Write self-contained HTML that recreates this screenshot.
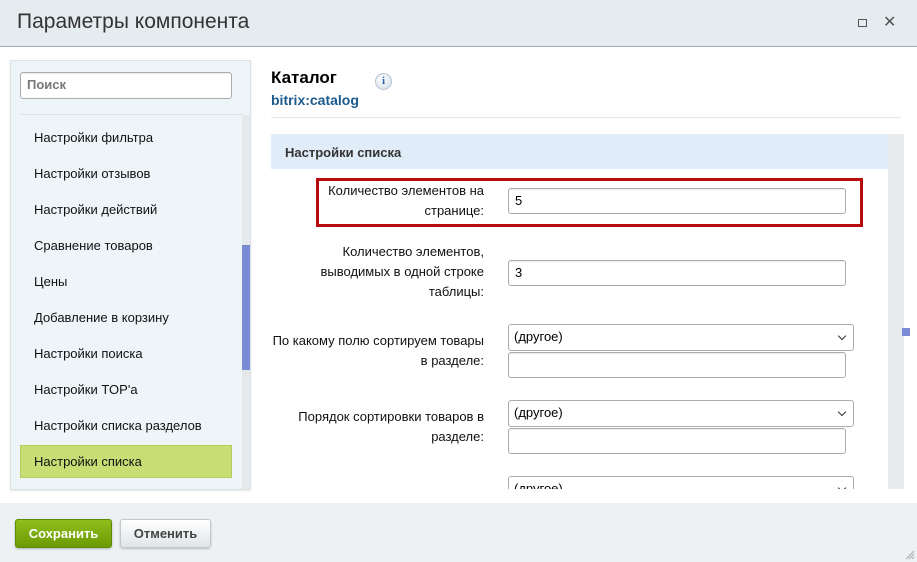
<!DOCTYPE html>
<html><head><meta charset="utf-8"><style>
*{box-sizing:border-box;margin:0;padding:0}
body{width:917px;height:562px;overflow:hidden;font-family:"Liberation Sans",Arial,sans-serif;font-size:13px;color:#222;background:#fff;position:relative}
.a{position:absolute}
.inp{position:absolute;background:#fff;border:1px solid #a8adb1;border-radius:3px;box-shadow:inset 0 1px 1px rgba(0,0,0,.08);padding-left:6px;font-size:13px;line-height:24px;color:#000}
.sel{position:absolute;background:#fff;border:1px solid #a8adb1;border-radius:3px;padding-left:5px;font-size:13px;line-height:24px;color:#000}
.sel:after{content:"";position:absolute;right:8px;top:8px;width:5px;height:5px;border-right:1.5px solid #333;border-bottom:1.5px solid #333;transform:rotate(45deg)}
.lbl{position:absolute;right:433px;text-align:right;line-height:20px;font-size:13px;color:#111}
.mi{position:absolute;left:34px;font-size:13px;color:#111}
</style></head><body>
<div class="a" style="left:0;top:0;width:917px;height:47px;background:#e4ecef;border-bottom:1px solid #a4abaf"></div>
<div class="a" style="left:17px;top:10px;font-size:21px;color:#333">Параметры компонента</div>
<div class="a" style="left:858px;top:19px;width:9px;height:8px;border:1px solid #555"></div>
<div class="a" style="left:883px;top:12px;font-size:16px;color:#555">✕</div>

<div class="a" style="left:10px;top:60px;width:241px;height:430px;background:#eef5f9;border:1px solid #dce3e6;box-shadow:0 1px 2px rgba(0,0,0,.1)"></div>
<div class="inp" style="left:20px;top:72px;width:212px;height:27px;color:#777;font-weight:bold;padding-left:6px">Поиск</div>
<div class="a" style="left:20px;top:114px;width:222px;height:1px;background:#dde4e8"></div>
<div class="a" style="left:242px;top:115px;width:8px;height:374px;background:#e6e9ec"></div>
<div class="a" style="left:242px;top:245px;width:8px;height:125px;background:#7a8bd6"></div>
<div class="a" style="left:20px;top:445px;width:212px;height:33px;background:#c8de75;border:1px solid #b5cc60"></div>
<div class="mi" style="top:130px">Настройки фильтра</div>
<div class="mi" style="top:166px">Настройки отзывов</div>
<div class="mi" style="top:202px">Настройки действий</div>
<div class="mi" style="top:238px">Сравнение товаров</div>
<div class="mi" style="top:274px">Цены</div>
<div class="mi" style="top:310px">Добавление в корзину</div>
<div class="mi" style="top:346px">Настройки поиска</div>
<div class="mi" style="top:382px">Настройки TOP'a</div>
<div class="mi" style="top:418px">Настройки списка разделов</div>
<div class="mi" style="top:454px">Настройки списка</div>

<div class="a" style="left:271px;top:68px;font-size:17px;font-weight:bold;color:#000">Каталог</div>
<div class="a" style="left:375px;top:73px;width:17px;height:17px;border-radius:50%;background:radial-gradient(circle at 40% 35%,#fff,#cfdbe6);border:1px solid #b8c6d3;color:#2a64a8;font-weight:bold;font-size:11px;text-align:center;line-height:15px;font-family:'Liberation Serif',serif">i</div>
<div class="a" style="left:271px;top:92px;font-size:14px;font-weight:bold;color:#1b5a8d">bitrix:catalog</div>
<div class="a" style="left:271px;top:117px;width:630px;height:1px;background:#e4e7e9"></div>
<div class="a" style="left:271px;top:134px;width:617px;height:35px;background:#e0ecf7"></div>
<div class="a" style="left:285px;top:145px;font-weight:bold;color:#333;font-size:13px">Настройки списка</div>
<div class="a" style="left:888px;top:134px;width:16px;height:355px;background:#e8eaed"></div>
<div class="a" style="left:902px;top:328px;width:8px;height:8px;background:#7a8bd6"></div>

<div class="a" style="left:316px;top:178px;width:547px;height:49px;border:3px solid #b80c0c"></div>
<div class="lbl" style="top:181px">Количество элементов на<br>странице:</div>
<div class="inp" style="left:508px;top:188px;width:338px;height:26px">5</div>

<div class="lbl" style="top:242px">Количество элементов,<br>выводимых в одной строке<br>таблицы:</div>
<div class="inp" style="left:508px;top:260px;width:338px;height:26px">3</div>

<div class="lbl" style="top:331px">По какому полю сортируем товары<br>в разделе:</div>
<div class="sel" style="left:508px;top:324px;width:346px;height:27px">(другое)</div>
<div class="inp" style="left:508px;top:352px;width:338px;height:26px"></div>

<div class="lbl" style="top:407px">Порядок сортировки товаров в<br>разделе:</div>
<div class="sel" style="left:508px;top:400px;width:346px;height:27px">(другое)</div>
<div class="inp" style="left:508px;top:428px;width:338px;height:26px"></div>

<div class="a" style="left:508px;top:476px;width:346px;height:13px;overflow:hidden"><div class="sel" style="left:0;top:0;width:346px;height:27px">(другое)</div></div>

<div class="a" style="left:0;top:503px;width:917px;height:59px;background:#edf1f3"></div>
<div class="a" style="left:15px;top:519px;width:97px;height:29px;border-radius:3px;background:linear-gradient(#8fbf1c,#6b9a05);border:1px solid #5f8a06;color:#fff;font-weight:bold;text-align:center;line-height:27px;box-shadow:0 1px 2px rgba(0,0,0,.25)">Сохранить</div>
<div class="a" style="left:120px;top:519px;width:91px;height:29px;border-radius:3px;background:linear-gradient(#fff,#dfe5e8);border:1px solid #c1c8cc;color:#444;font-weight:bold;text-align:center;line-height:27px;box-shadow:0 1px 2px rgba(0,0,0,.2)">Отменить</div>
<svg class="a" style="left:905px;top:550px" width="10" height="10"><path d="M1 9L9 1M4 9L9 4M7 9L9 7" stroke="#aaa" stroke-width="1"/></svg>
</body></html>
